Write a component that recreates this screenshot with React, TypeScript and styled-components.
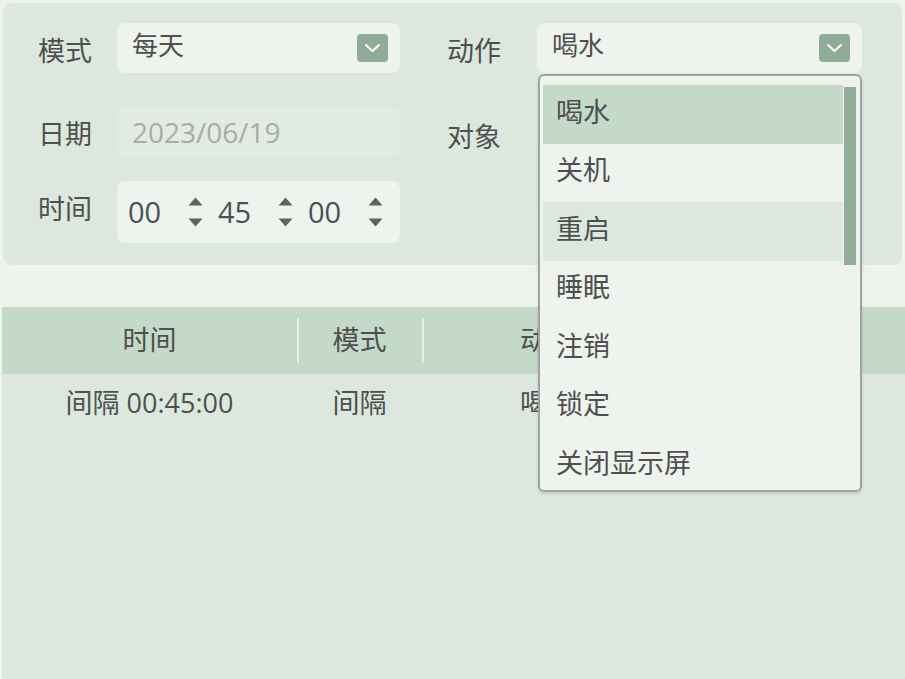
import React from 'react';
import styled, { createGlobalStyle } from 'styled-components';

const GlobalStyle = createGlobalStyle`
  html, body {
    margin: 0;
    padding: 0;
    background: #eef3ee;
  }
  body {
    font-family: "Open Sans", "Noto Sans CJK SC", sans-serif;
    color: #4e4e4e;
  }
`;

const Page = styled.div`
  display: flex;
  flex-direction: column;
  min-height: 100vh;
  padding-left: 2px;
  box-sizing: border-box;
`;

const Panel = styled.div`
  margin: 3px 3px 0 1px;
  height: 262px;
  box-sizing: border-box;
  padding: 20px 0 0 35px;
  background: #dce7dd;
  border-radius: 9px;
  display: flex;
  flex-direction: column;
`;

const FieldRow = styled.div<{ $h: number; $top?: number }>`
  display: grid;
  grid-template-columns: 79px 283px 47px 90px 325px;
  height: ${p => p.$h}px;
  margin-top: ${p => p.$top || 0}px;
`;

const Label = styled.div<{ $col: number; $dy?: number }>`
  grid-column: ${p => p.$col};
  align-self: center;
  font-size: 27px;
  line-height: 30px;
  color: #4f4f4f;
  transform: translateY(${p => p.$dy || 0}px);
`;

const SelectBox = styled.div<{ $col: number }>`
  grid-column: ${p => p.$col};
  position: relative;
  display: flex;
  align-items: center;
  justify-content: space-between;
  padding: 0 12px 0 15px;
  background: #eef3ee;
  border-radius: 8px;
  font-size: 26px;
  line-height: 30px;
  color: #4f4f4f;
`;

const SelectValue = styled.span`
  transform: translateY(-3px);
`;

const ChevronButton = styled.div`
  width: 31px;
  height: 28px;
  border-radius: 4px;
  background: #8fac98;
  display: flex;
  align-items: center;
  justify-content: center;
`;

const DateBox = styled.div`
  grid-column: 2;
  display: flex;
  align-items: center;
  padding-left: 15px;
  background: #e2ebe3;
  border-radius: 8px;
  font-size: 28px;
  line-height: 30px;
  color: #a6aca8;
`;

const TimeBox = styled.div`
  grid-column: 2;
  display: flex;
  align-items: center;
  padding-left: 11px;
  background: #eef3ee;
  border-radius: 8px;
`;

const TimePart = styled.div`
  display: flex;
  align-items: center;
  width: 90px;
`;

const TimeNumber = styled.span`
  width: 60px;
  font-size: 29px;
  line-height: 30px;
  color: #4b5058;
`;

const Spinner = styled.div`
  display: flex;
  flex-direction: column;
  gap: 12px;
`;

const Popup = styled.div`
  position: absolute;
  top: 51px;
  left: 1px;
  width: 324px;
  height: 418px;
  box-sizing: border-box;
  border: 2px solid #9ca4a6;
  border-radius: 6px;
  background: #eef3ee;
  padding: 9px 17px 0 3px;
  overflow: hidden;
  box-shadow: 0 2px 3px rgba(0, 0, 0, 0.12);
  z-index: 2;
`;

const Option = styled.div<{ $state?: 'selected' | 'hover' }>`
  height: 58.5px;
  box-sizing: border-box;
  display: flex;
  align-items: center;
  padding: 0 0 5px 13px;
  font-size: 27px;
  color: #4f4f4f;
  background: ${p =>
    p.$state === 'selected' ? '#c4d9c8' : p.$state === 'hover' ? '#dce7dd' : 'transparent'};
`;

const ScrollThumb = styled.div`
  position: absolute;
  top: 11px;
  right: 4px;
  width: 12px;
  height: 178px;
  background: #93ad9a;
`;

const Table = styled.div`
  margin-top: 42px;
  flex: 1;
  display: flex;
  flex-direction: column;
  background: #dce7dd;
`;

const HeaderRow = styled.div`
  display: grid;
  grid-template-columns: 295px 125px 250px 1fr;
  height: 67px;
  background: #c4d9c8;
`;

const HeaderCell = styled.div<{ $divider?: boolean }>`
  position: relative;
  display: flex;
  align-items: center;
  justify-content: center;
  padding-bottom: 5px;
  font-size: 27px;
  color: #4f4f4f;
  &::before {
    content: '';
    display: ${p => (p.$divider ? 'block' : 'none')};
    position: absolute;
    left: 0;
    top: 11px;
    bottom: 11px;
    width: 2px;
    background: #e6eee6;
  }
`;

const BodyRow = styled.div`
  display: grid;
  grid-template-columns: 295px 125px 250px 1fr;
  height: 60px;
`;

const BodyCell = styled.div`
  display: flex;
  align-items: center;
  justify-content: center;
  padding-bottom: 5px;
  font-size: 27px;
  color: #4f4f4f;
`;

const Chevron = () => (
  <svg width="17" height="10" viewBox="0 0 17 10">
    <path d="M2 2 L8.5 8 L15 2" fill="none" stroke="#fff" strokeWidth="2" strokeLinecap="round" strokeLinejoin="round" />
  </svg>
);

const Arrows = () => (
  <Spinner>
    <svg width="15" height="9" viewBox="0 0 15 9">
      <path d="M7.5 0.5 L14.5 8.5 L0.5 8.5 Z" fill="#59685d" />
    </svg>
    <svg width="15" height="9" viewBox="0 0 15 9">
      <path d="M0.5 0.5 L14.5 0.5 L7.5 8.5 Z" fill="#59685d" />
    </svg>
  </Spinner>
);

const actions = ['喝水', '关机', '重启', '睡眠', '注销', '锁定', '关闭显示屏'];

const App: React.FC = () => {
  return (
    <Page>
      <GlobalStyle />
      <Panel>
        <FieldRow $h={50}>
          <Label $col={1} $dy={3}>模式</Label>
          <SelectBox $col={2}>
            <SelectValue>每天</SelectValue>
            <ChevronButton><Chevron /></ChevronButton>
          </SelectBox>
          <Label $col={4} $dy={3}>动作</Label>
          <SelectBox $col={5}>
            <SelectValue>喝水</SelectValue>
            <ChevronButton><Chevron /></ChevronButton>
            <Popup>
              {actions.map((a, i) => (
                <Option key={a} $state={i === 0 ? 'selected' : i === 2 ? 'hover' : undefined}>
                  {a}
                </Option>
              ))}
              <ScrollThumb />
            </Popup>
          </SelectBox>
        </FieldRow>
        <FieldRow $h={50} $top={34}>
          <Label $col={1} $dy={2}>日期</Label>
          <DateBox>2023/06/19</DateBox>
          <Label $col={4} $dy={5}>对象</Label>
        </FieldRow>
        <FieldRow $h={62} $top={24}>
          <Label $col={1} $dy={-3}>时间</Label>
          <TimeBox>
            {['00', '45', '00'].map((t, i) => (
              <TimePart key={i}>
                <TimeNumber>{t}</TimeNumber>
                <Arrows />
              </TimePart>
            ))}
          </TimeBox>
        </FieldRow>
      </Panel>
      <Table>
        <HeaderRow>
          <HeaderCell>时间</HeaderCell>
          <HeaderCell $divider>模式</HeaderCell>
          <HeaderCell $divider>动作</HeaderCell>
          <HeaderCell $divider>对象</HeaderCell>
        </HeaderRow>
        <BodyRow>
          <BodyCell>间隔 00:45:00</BodyCell>
          <BodyCell>间隔</BodyCell>
          <BodyCell>喝水</BodyCell>
          <BodyCell></BodyCell>
        </BodyRow>
      </Table>
    </Page>
  );
};

export default App;
